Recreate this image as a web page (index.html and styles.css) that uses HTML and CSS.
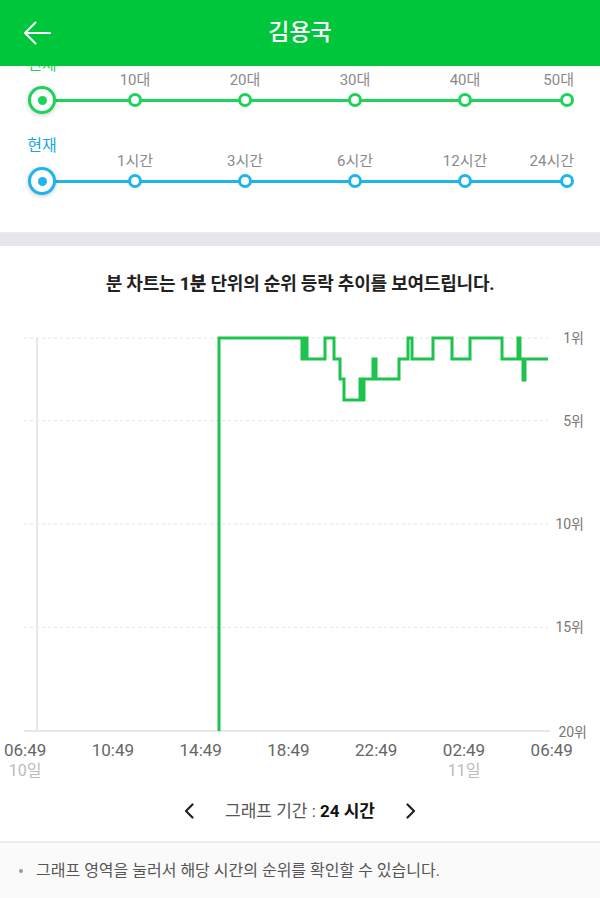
FILE: index.html
```html
<!DOCTYPE html>
<html lang="ko">
<head>
<meta charset="utf-8">
<title>김용국</title>
<link rel="stylesheet" href="styles.css">
</head>
<body>
<header class="topbar">
  <button class="back" aria-label="뒤로">
    <svg width="28" height="24" viewBox="0 0 28 24"><path d="M27 12H2M12.5 1.5L2 12l10.5 10.5" fill="none" stroke="#fff" stroke-width="2" stroke-linecap="round" stroke-linejoin="round"/></svg>
  </button>
  <h1 class="title">김용국</h1>
  <span></span>
</header>

<main>
  <section class="filters">
    <div class="slider green">
      <div class="stop on"><span class="lbl">전체</span><span class="node"><i class="dot"></i></span></div>
      <div class="stop"><span class="lbl">10대</span><span class="node"><i class="dot"></i></span></div>
      <div class="stop"><span class="lbl">20대</span><span class="node"><i class="dot"></i></span></div>
      <div class="stop"><span class="lbl">30대</span><span class="node"><i class="dot"></i></span></div>
      <div class="stop"><span class="lbl">40대</span><span class="node"><i class="dot"></i></span></div>
      <div class="stop"><span class="lbl">50대</span><span class="node"><i class="dot"></i></span></div>
    </div>
    <div class="slider blue">
      <div class="stop on"><span class="lbl">현재</span><span class="node"><i class="dot"></i></span></div>
      <div class="stop"><span class="lbl">1시간</span><span class="node"><i class="dot"></i></span></div>
      <div class="stop"><span class="lbl">3시간</span><span class="node"><i class="dot"></i></span></div>
      <div class="stop"><span class="lbl">6시간</span><span class="node"><i class="dot"></i></span></div>
      <div class="stop"><span class="lbl">12시간</span><span class="node"><i class="dot"></i></span></div>
      <div class="stop"><span class="lbl">24시간</span><span class="node"><i class="dot"></i></span></div>
    </div>
  </section>

  <div class="band"></div>

  <section class="chart">
    <h2 class="chart-title">분 차트는 <b>1분</b> 단위의 순위 등락 추이를 보여드립니다.</h2>
    <svg class="plot" width="600" height="419" viewBox="0 0 600 419">
      <g class="grid">
        <line x1="24" y1="18" x2="548" y2="18"/>
        <line x1="24" y1="100.7" x2="548" y2="100.7"/>
        <line x1="24" y1="204" x2="548" y2="204"/>
        <line x1="24" y1="307.4" x2="548" y2="307.4"/>
      </g>
      <line class="axis" x1="37" y1="18" x2="37" y2="411"/>
      <line class="axis" x1="24" y1="411" x2="550" y2="411"/>
      <polyline class="rank" points="219,411 219,18 302,18 302,39 305,39 305,18 307,18 307,39 325,39 325,18 334,18 334,39 340,39 340,59 344,59 344,80 360,80 360,59 362,59 362,80 364,80 364,59 373,59 373,39 376,39 376,59 399,59 399,39 408,39 408,18 412,18 412,39 433,39 433,18 452,18 452,39 470,39 470,18 502,18 502,39 518,39 518,18 520,18 520,39 523,39 523,60 525,60 525,39 548,39"/>
      <g class="ylab">
        <text x="584" y="18">1위</text>
        <text x="584" y="101">5위</text>
        <text x="584" y="204">10위</text>
        <text x="584" y="307">15위</text>
        <text x="587" y="412">20위</text>
      </g>
    </svg>
    <div class="xaxis">
      <div class="tick"><span class="time">06:49</span><span class="date">10일</span></div>
      <div class="tick"><span class="time">10:49</span></div>
      <div class="tick"><span class="time">14:49</span></div>
      <div class="tick"><span class="time">18:49</span></div>
      <div class="tick"><span class="time">22:49</span></div>
      <div class="tick"><span class="time">02:49</span><span class="date">11일</span></div>
      <div class="tick"><span class="time">06:49</span></div>
    </div>
    <div class="period">
      <button class="chev" aria-label="이전">
        <svg width="10" height="16" viewBox="0 0 10 16"><path d="M8.5 1.5L2 8l6.5 6.5" fill="none" stroke="#222" stroke-width="2.2" stroke-linecap="round" stroke-linejoin="round"/></svg>
      </button>
      <p class="period-text">그래프 기간 : <b>24 시간</b></p>
      <button class="chev" aria-label="다음">
        <svg width="10" height="16" viewBox="0 0 10 16"><path d="M1.5 1.5L8 8l-6.5 6.5" fill="none" stroke="#222" stroke-width="2.2" stroke-linecap="round" stroke-linejoin="round"/></svg>
      </button>
    </div>
  </section>

  <section class="note">
    <p><span class="bullet"></span>그래프 영역을 눌러서 해당 시간의 순위를 확인할 수 있습니다.</p>
  </section>
</main>
</body>
</html>
```

FILE: styles.css
```css
* { box-sizing: border-box; }

html, body {
  margin: 0;
  padding: 0;
}

body {
  width: 600px;
  background: #fff;
  font-family: Roboto, "Noto Sans CJK KR", sans-serif;
  color: #333;
}

button {
  border: 0;
  background: none;
  padding: 0;
  margin: 0;
  display: flex;
  align-items: center;
  justify-content: center;
}

/* header */
.topbar {
  position: fixed;
  top: 0;
  left: 0;
  width: 600px;
  height: 66px;
  background: #00c63b;
  display: grid;
  grid-template-columns: 74px 1fr 74px;
  align-items: center;
  z-index: 10;
}

.back {
  width: 74px;
  height: 66px;
  justify-content: flex-start;
  padding-left: 23px;
}

.title {
  margin: 0;
  text-align: center;
  color: #fff;
  font-size: 23px;
  font-weight: 500;
  line-height: 30px;
}

/* filter sliders */
.filters {
  padding: 55px 0 41px;
  display: flex;
  flex-direction: column;
  gap: 26px;
}

.slider {
  position: relative;
  display: grid;
  grid-template-columns: 84px 102px 118px 102px 118px 1fr;
  align-items: end;
}

.slider.green { --c: #1ed35a; --t: #1ed35a; }
.slider.blue { --c: #1fb4ee; --t: #17a7e4; }

.slider::before {
  content: "";
  position: absolute;
  left: 42px;
  right: 33px;
  bottom: 8.5px;
  height: 3px;
  background: var(--c);
}

.stop {
  display: flex;
  flex-direction: column;
  align-items: center;
}

.stop:last-child {
  align-items: flex-end;
  padding-right: 26px;
}

.lbl {
  font-size: 15px;
  line-height: 20px;
  color: #8a8a8a;
  white-space: nowrap;
}

.stop.on .lbl {
  color: var(--t);
  margin-bottom: 15px;
  font-size: 16px;
}

.node {
  height: 20px;
  display: flex;
  align-items: center;
  justify-content: center;
  position: relative;
  z-index: 1;
}

.dot {
  display: block;
  width: 14px;
  height: 14px;
  border: 3px solid var(--c);
  border-radius: 50%;
  background: #fff;
}

.stop.on .dot {
  width: 28px;
  height: 28px;
  display: flex;
  align-items: center;
  justify-content: center;
  box-shadow: 0 1px 4px rgba(0, 0, 0, 0.22);
}

.stop.on .dot::after {
  content: "";
  width: 9px;
  height: 9px;
  border-radius: 50%;
  background: var(--c);
}

/* divider band */
.band {
  height: 14px;
  background: #e6e6eb;
  border-top: 1px solid #ececf0;
}

/* chart */
.chart-title {
  margin: 26px 0 0;
  text-align: center;
  font-size: 18px;
  line-height: 24px;
  font-weight: 700;
  color: #222;
  letter-spacing: -0.2px;
}

.chart-title b {
  font-weight: 800;
}

.plot {
  display: block;
  margin-top: 24px;
  overflow: visible;
}

.grid line {
  stroke: #e2e2e2;
  stroke-width: 1;
  stroke-dasharray: 3 3;
}

.axis {
  stroke: #e8e8e8;
  stroke-width: 2;
}

.rank {
  fill: none;
  stroke: #1dc34c;
  stroke-width: 3;
  stroke-linejoin: miter;
}

.ylab text {
  font-family: Roboto, "Noto Sans CJK KR", sans-serif;
  font-size: 14px;
  fill: #777;
  text-anchor: end;
  dominant-baseline: central;
}

.xaxis {
  display: flex;
  justify-content: space-between;
  padding: 0 27px 0 4px;
}

.tick {
  display: flex;
  flex-direction: column;
  align-items: center;
}

.time {
  font-size: 17px;
  line-height: 22px;
  color: #666;
}

.date {
  font-size: 16px;
  line-height: 20px;
  color: #bcbcbc;
}

.period {
  margin-top: 18px;
  padding-bottom: 18px;
  border-bottom: 2px solid #ececec;
  display: flex;
  justify-content: center;
  align-items: center;
  gap: 31px;
}

.chev {
  width: 10px;
  height: 24px;
}

.period-text {
  margin: 0;
  font-size: 17px;
  line-height: 24px;
  color: #555;
  white-space: nowrap;
}

.period-text b {
  color: #111;
  font-weight: 700;
}

/* note */
.note {
  background: #fafafa;
  min-height: 56px;
  padding: 18px 0 18px 19px;
}

.note p {
  margin: 0;
  display: flex;
  align-items: center;
  font-size: 16px;
  line-height: 20px;
  color: #555;
}

.bullet {
  width: 4px;
  height: 4px;
  border-radius: 50%;
  background: #999;
  margin-right: 13px;
}
```
